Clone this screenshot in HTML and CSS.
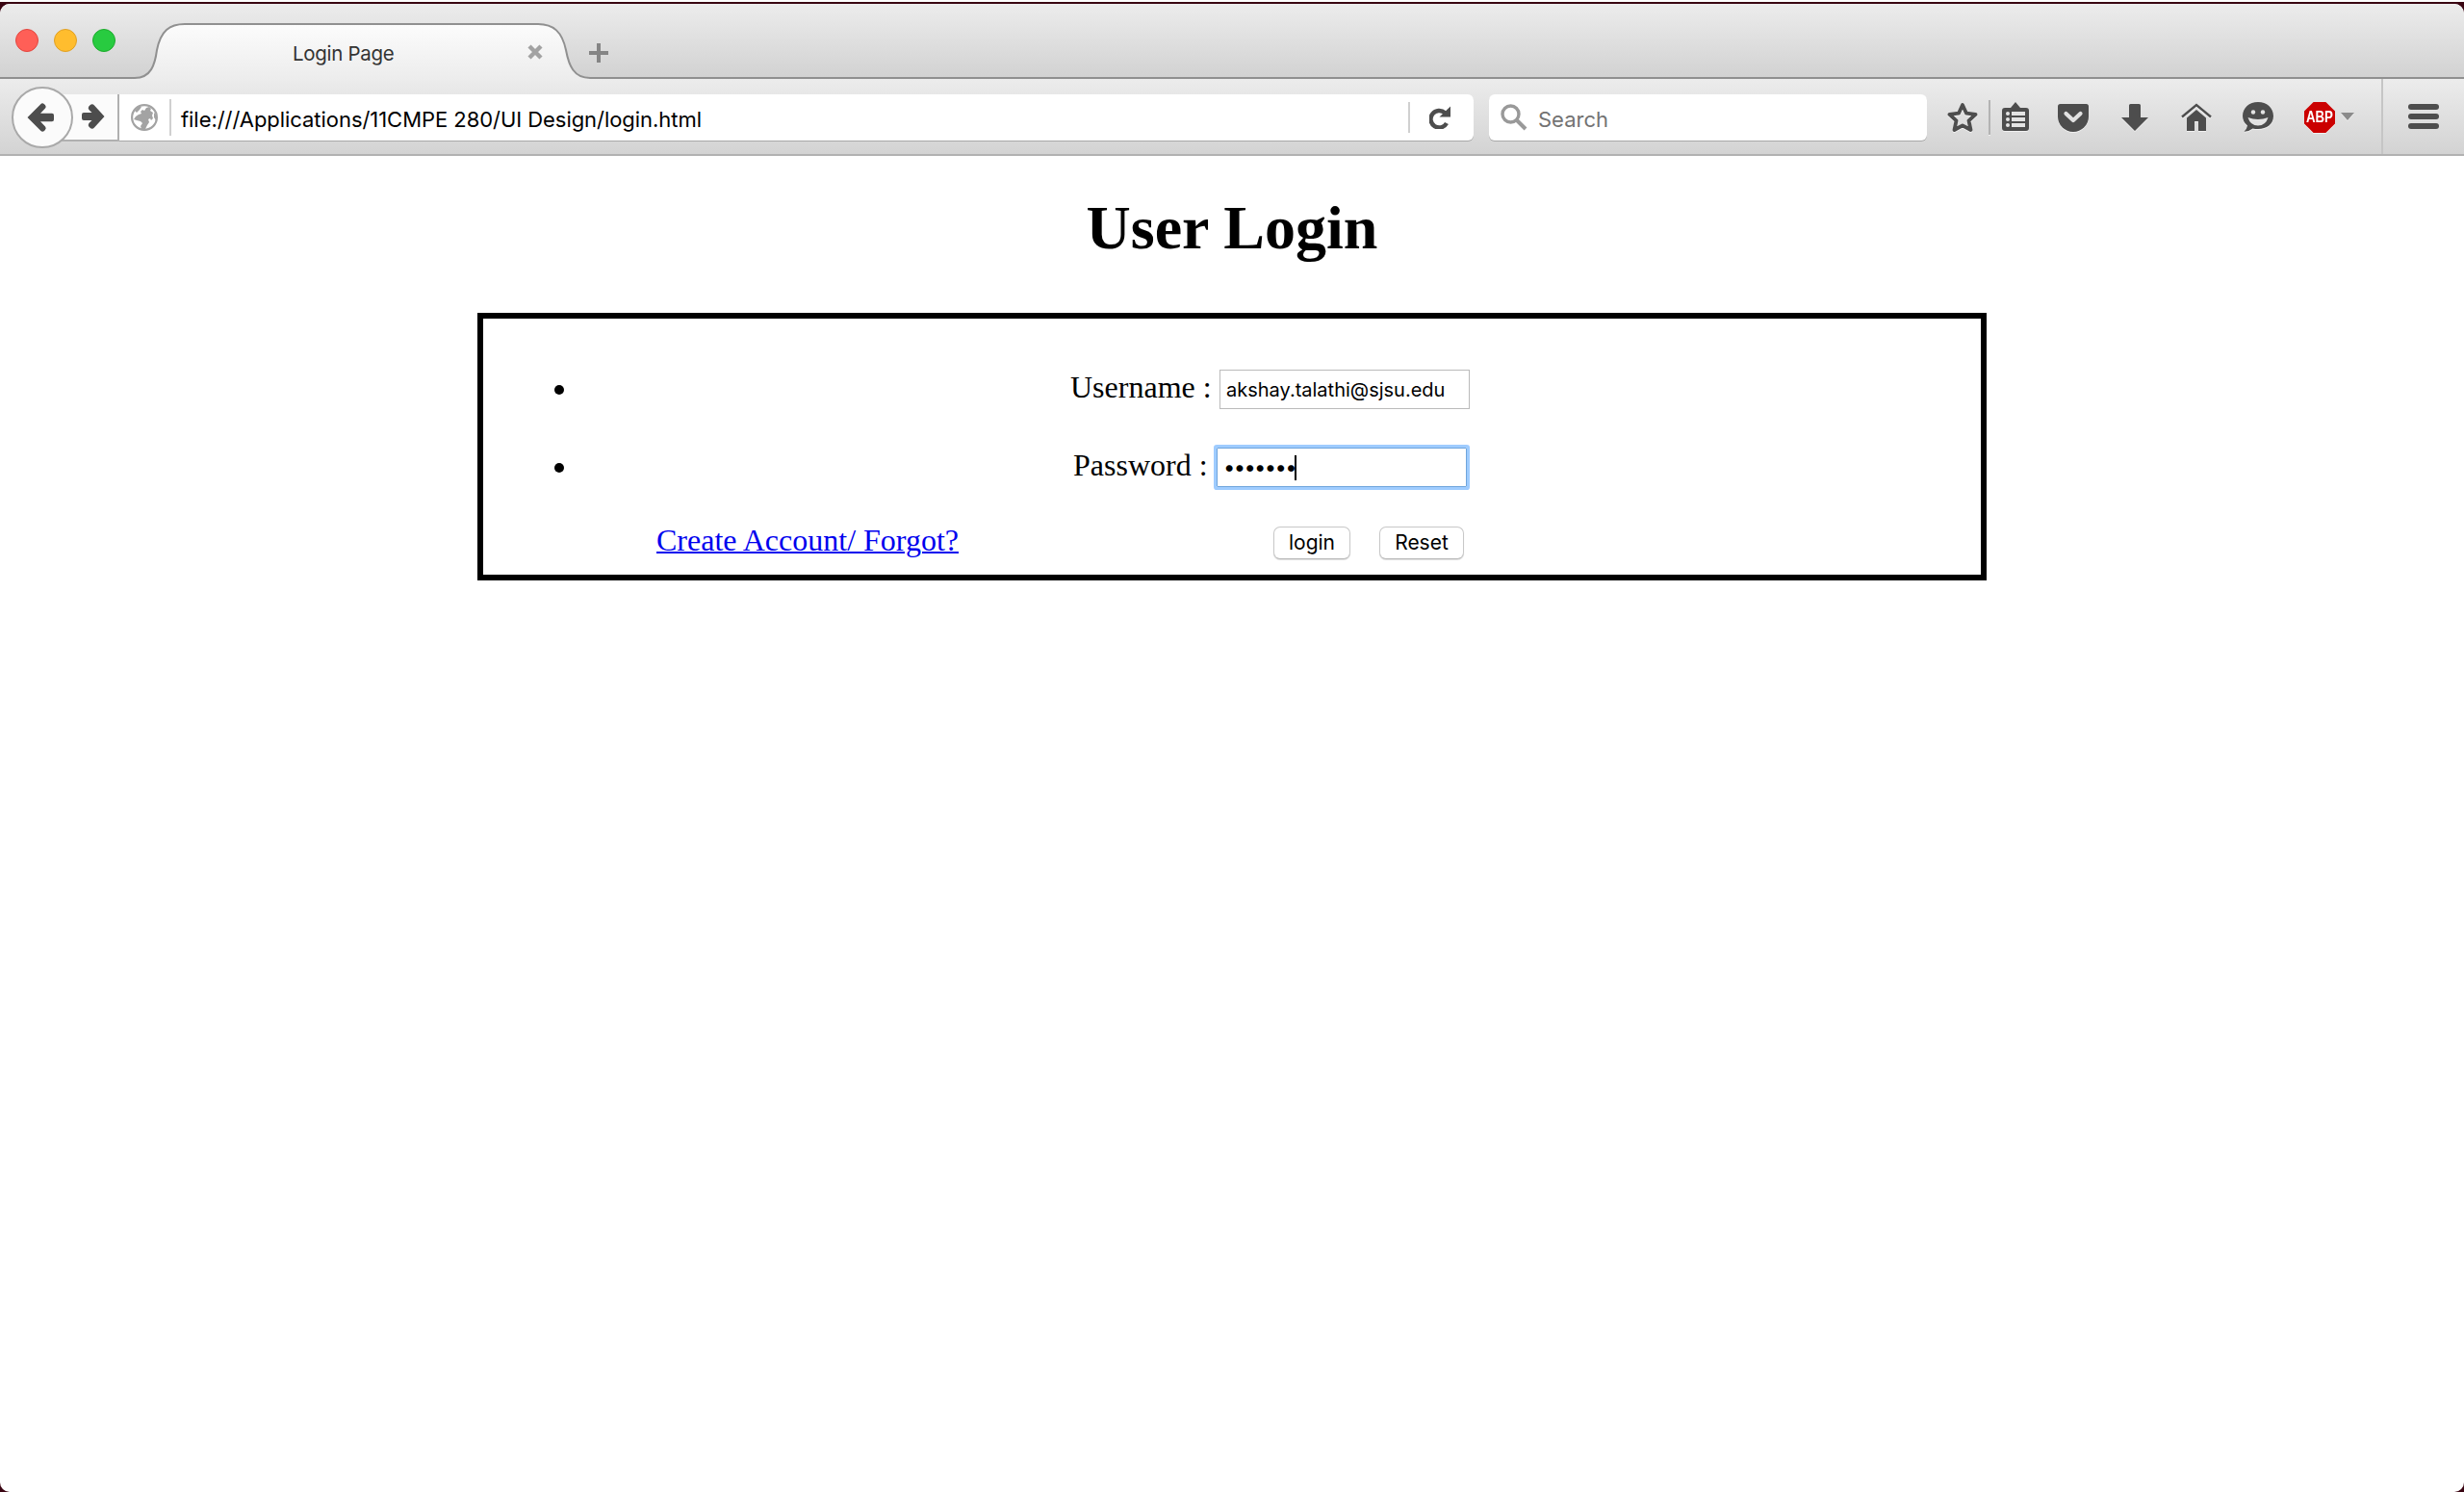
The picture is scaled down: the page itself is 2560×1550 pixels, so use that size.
FILE: index.html
```html
<!DOCTYPE html>
<html lang="en">
<head>
<meta charset="utf-8">
<title>Login Page</title>
<link rel="stylesheet" href="styles.css">
</head>
<body>
<div class="window">
  <header class="tabstrip">
    <div class="lights"><i class="light red"></i><i class="light amber"></i><i class="light green"></i></div>
    <div class="tab">
      <svg class="tab-shape" width="476" height="62" viewBox="0 0 476 62">
        <defs><linearGradient id="tabfill" x1="0" y1="0" x2="0" y2="1"><stop offset="0" stop-color="#fcfcfc"/><stop offset="1" stop-color="#ececec"/></linearGradient></defs>
        <path d="M0 62V59H3C20 59 24 45 26 30C30 10 39 3 55 3H422C438 3 447 11 451 30C454 46 459 59 476 59V62Z" fill="url(#tabfill)"/>
        <path d="M0 59H3C20 59 24 45 26 30C30 10 39 3 55 3H422C438 3 447 11 451 30C454 46 459 59 476 59" fill="none" stroke="#909090" stroke-width="2"/>
      </svg>
      <span class="tab-title">Login Page</span>
      <svg class="tab-close" width="16" height="16" viewBox="0 0 16 16"><path d="M2 2L14 14M14 2L2 14" stroke="#a2a2a2" stroke-width="4.4"/></svg>
    </div>
    <svg class="newtab" width="20" height="20" viewBox="0 0 20 20"><path d="M8 0h4v8h8v4h-8v8H8v-8H0V8h8z" fill="#858585"/></svg>
  </header>

  <nav class="toolbar">
    <div class="backwrap">
      <svg class="back" width="64" height="64" viewBox="0 0 64 64"><circle cx="32" cy="32" r="31" fill="#fbfbfb" stroke="#a9a9a9" stroke-width="2"/><path d="M16.500 32L30.500 18Q32 16.500 34 18.200L35 19.300Q36.500 21 35 22.600L30 27.700H42Q44 27.700 44 29.700V34.300Q44 36.300 42 36.300H30L35 41.400Q36.500 43 35 44.800L34 46Q32 47.500 30.500 46Z" fill="#4d4d4d"/></svg>
      <div class="forward"><svg width="24" height="28" viewBox="0 0 24 28"><path d="M23.500 14L13 25.500Q11 28 8.500 25.800L7.300 24.500Q6 23 7.400 21L10.500 18H2Q0 18 0 16V12Q0 10 2 10H10.500L7.400 7Q6 5 7.300 3.500L8.500 2.200Q11 0 13 2.500Z" fill="#4d4d4d"/></svg></div>
    </div>
    <div class="urlbar">
      <svg class="globe" width="28" height="28" viewBox="0 0 28 28"><circle cx="14" cy="14" r="12.900" fill="#fff" stroke="#a3a3a3" stroke-width="2.200"/><path d="M3 16L5 13L8 11L11 10L10 8L12 6L14 7L16 4L19 3L21 5L20 7L23 9L22 12L23 15L21 17L20 15L18 16L19 19L17 22L15 26L11 26L10 23L12 20L10 18L6 17Z" fill="#a3a3a3"/><path d="M4 7L8 3L11 3L9 6L6 9Z" fill="#a3a3a3"/><path d="M24 9L27 12L26 17L24 14Z" fill="#a3a3a3"/></svg>
      <i class="sep"></i>
      <span class="url">file:///Applications/11CMPE 280/UI Design/login.html</span>
      <i class="sep short"></i>
      <svg class="reload" width="22" height="24" viewBox="0 0 22 24"><path d="M16.200 7.200A8.800 8.800 0 1 0 18 18" fill="none" stroke="#4d4d4d" stroke-width="4.400"/><path d="M22 .5V11.600H10.500Z" fill="#4d4d4d"/></svg>
    </div>
    <div class="search">
      <svg width="28" height="28" viewBox="0 0 28 28"><circle cx="10.500" cy="10.500" r="8.500" fill="none" stroke="#999" stroke-width="3.400"/><path d="M16.500 16.500L26 26" stroke="#999" stroke-width="4"/></svg>
      <span class="hint">Search</span>
    </div>
    <div class="icons">
      <svg class="star" width="32" height="32" viewBox="0 0 32 32"><path d="M16 3L20 11.700L29.500 12.900L22.500 19.400L24.500 29L16 24.400L7.500 29L9.500 19.400L2.500 12.900L12 11.700Z" fill="none" stroke="#4d4d4d" stroke-width="3.800" stroke-linejoin="round"/></svg>
      <i class="rule"></i>
      <svg class="list" width="28" height="32" viewBox="0 0 28 32"><path d="M3 6H9L14 0L19 6H25Q28 6 28 9V27Q28 30 25 30H3Q0 30 0 27V9Q0 6 3 6Z" fill="#4d4d4d"/><g fill="#e4e4e4"><circle cx="6" cy="12" r="2"/><circle cx="6" cy="18" r="2"/><circle cx="6" cy="24" r="2"/><path d="M10 10h14v4H10zM10 16h14v4H10zM10 22h14v4H10z"/></g></svg>
      <svg class="pocket" width="32" height="32" viewBox="0 0 32 32"><path d="M2.500 2H29.500Q32 2 32 4.500V15A16 16 0 0 1 0 15V4.500Q0 2 2.500 2Z" fill="#4d4d4d"/><path d="M8.500 12L16 19L23.500 12" fill="none" stroke="#e2e2e2" stroke-width="4.200" stroke-linecap="round" stroke-linejoin="round"/></svg>
      <svg class="download" width="28" height="32" viewBox="0 0 28 32"><path d="M9.500 2H18.500Q20 2 20 3.500V16H28L14 30L0 16H8V3.500Q8 2 9.500 2Z" fill="#4d4d4d"/></svg>
      <svg class="home" width="32" height="32" viewBox="0 0 32 32"><path d="M1 15.500L16 3L31 15.500" fill="none" stroke="#4d4d4d" stroke-width="2.400"/><path d="M6 16.500L16 8L26 16.500V30H18V20.500Q18 20 17.500 20H14.500Q14 20 14 20.500V30H6Z" fill="#4d4d4d"/></svg>
      <svg class="smile" width="32" height="32" viewBox="0 0 32 32"><path d="M16 0C25 0 32 6 32 14.500S25 28 16 28Q13 28 10.500 27.500Q7 30.500 1.500 30.800Q4.500 28 5 24.500Q0 20.500 0 14.500C0 6 7 0 16 0Z" fill="#4d4d4d"/><circle cx="11" cy="10.500" r="2.200" fill="#e4e4e4"/><circle cx="21" cy="10.500" r="2.200" fill="#e4e4e4"/><path d="M5.500 16Q16 20 26.500 16Q24 24.500 16 24.500T5.500 16Z" fill="#e4e4e4"/></svg>
      <div class="abp"><span>ABP</span></div>
      <svg class="caret" width="14" height="8" viewBox="0 0 14 8"><path d="M0 0H14L7 8Z" fill="#8b8b8b"/></svg>
    </div>
    <div class="menu"><i></i><i></i><i></i></div>
  </nav>

  <main class="page">
    <h1>User Login</h1>
    <form class="login">
      <ul>
        <li><label class="user">Username :</label><span class="field">akshay.talathi@sjsu.edu</span></li>
        <li><label class="pass">Password :</label><span class="field focus"><span class="dots">•••••••</span><i class="cursor"></i></span></li>
      </ul>
      <div class="actions">
        <a href="#">Create Account/ Forgot?</a>
        <button type="button" class="b-login">login</button>
        <button type="button" class="b-reset">Reset</button>
      </div>
    </form>
  </main>
</div>
</body>
</html>
```
FILE: styles.css
```css
* { box-sizing: border-box; }
html { background: #3a0512; }
body { margin: 0; height: 1550px; overflow: hidden; border-top: 2px solid #fff; padding-top: 2px; background: #3a0512; font-family: Inter, "Liberation Sans", sans-serif; }
svg { display: block; flex: none; }
i { display: block; flex: none; }
.window { height: 1546px; background: #fff; border-radius: 10px; overflow: hidden; }

/* Tab strip */
.tabstrip { display: flex; height: 78px; background: linear-gradient(#ececec, #d2d2d2); border-bottom: 2px solid #909090; }
.lights { display: flex; gap: 16px; padding: 26px 0 0 16px; width: 137px; }
.light { width: 24px; height: 24px; border-radius: 50%; border: 1px solid #e2463f; background: #ff5f57; }
.light.amber { background: #ffbd2e; border-color: #e0a024; }
.light.green { background: #28cb40; border-color: #1dab2c; }
.tab { position: relative; width: 476px; height: 78px; display: flex; }
.tab-shape { position: absolute; left: 0; top: 18px; }
.tab-title { position: relative; width: 107px; margin: 32px 0 0 167px; font-size: 20.5px; letter-spacing: -.3px; line-height: 39px; color: #333; white-space: nowrap; }
.tab-close { position: relative; margin: 42px 0 0 137px; }
.newtab { margin: 41px 0 0 -1px; }

/* Navigation toolbar */
.toolbar { display: flex; align-items: center; height: 80px; padding: 2px 0 0 12px; background: linear-gradient(#ececec, #d3d3d3); border-bottom: 2px solid #b2b2b2; }
.backwrap { display: flex; align-items: center; }
.back { position: relative; z-index: 1; }
.forward { display: flex; align-items: center; width: 60px; height: 49px; margin-left: -12px; padding-left: 21px; background: #fbfbfb; border-right: 2px solid #b0b0b0; border-bottom: 2px solid #b0b0b0; }
.urlbar, .search { display: flex; align-items: center; height: 48px; background: #fff; border-radius: 6px; box-shadow: 0 1px 0 #a8a8a8; font-size: 22px; line-height: 48px; white-space: nowrap; }
.urlbar { width: 1407px; padding-left: 12px; border-radius: 0 6px 6px 0; }
.sep { width: 2px; height: 38px; background: #d0d0d0; margin-left: 12px; }
.sep.short { height: 32px; margin-left: auto; }
.url { margin-left: 10px; padding-top: 4px; letter-spacing: -.05px; }
.reload { margin: 0 24px 0 20px; }
.search { width: 455px; margin-left: 16px; padding-left: 12px; color: #737373; }
.hint { margin-left: 11px; padding-top: 4px; }
.icons { display: flex; align-items: center; margin-left: 21px; filter: drop-shadow(0 1px 0 rgba(255,255,255,.6)); }
.rule { width: 2px; height: 36px; margin: 0 12px 0 11px; background: #b3b3b3; }
.pocket { margin-left: 30px; }
.download { margin-left: 34px; }
.home { margin-left: 34px; }
.smile { margin-left: 32px; }
.abp { display: flex; align-items: center; justify-content: center; width: 32px; height: 32px; margin-left: 32px; background: #cb0000; clip-path: polygon(30% 0, 70% 0, 100% 30%, 100% 70%, 70% 100%, 30% 100%, 0 70%, 0 30%); }
.abp span { color: #fff; font: bold 17px/32px "Liberation Sans", sans-serif; transform: scaleX(.78); }
.caret { margin: 0 0 2px 6px; }
.menu { display: flex; flex-direction: column; gap: 4px; align-self: stretch; margin: -2px 0 0 28px; padding: 26px 0 0 26px; border-left: 2px solid #c5c5c5; }
.menu i { width: 32px; height: 6px; border-radius: 3px; background: #4d4d4d; }

/* Login page */
.page { padding-top: 38px; font-family: "Liberation Serif", serif; font-size: 32px; color: #000; }
h1 { margin: 0 0 51px; font-size: 64px; line-height: 74px; text-align: center; }
.login { width: 1568px; height: 278px; margin-left: 496px; padding-top: 53px; border: 6px solid #000; }
ul { margin: 0; padding: 0 0 0 74px; list-style: none; }
li { display: flex; height: 41px; margin-bottom: 40px; white-space: nowrap; }
li::before { content: ""; width: 10px; height: 10px; margin-top: 16px; border-radius: 50%; background: #000; }
label { line-height: 36px; }
.user { width: 155px; margin-left: 526px; }
.pass { width: 149px; margin-left: 529px; }
.field { display: flex; width: 260px; height: 41px; padding-left: 6px; border: 1px solid #bababa; font: 20px/41px Inter, sans-serif; }
.focus { border-color: #6fa5dc; border-radius: 1px; box-shadow: 0 0 0 3px #9fccff; font-size: 22px; line-height: 39px; }
.dots { letter-spacing: -1.67px; }
.cursor { width: 2px; height: 26px; margin: 7px 0 0 -1px; background: #000; }
.actions { display: flex; padding-left: 180px; }
.actions a { color: #0000ee; line-height: 30px; white-space: nowrap; text-decoration-thickness: 2px; }
button { height: 34px; margin-top: 1px; padding: 0; border: 1px solid #c8c8c8; border-bottom-color: #b8b8b8; border-radius: 7px; background: #fff; box-shadow: 0 1px 1px #ddd; font: 21px/32px Inter, sans-serif; color: #000; }
.b-login { width: 80px; margin-left: 327px; }
.b-reset { width: 88px; margin-left: 30px; }
```
